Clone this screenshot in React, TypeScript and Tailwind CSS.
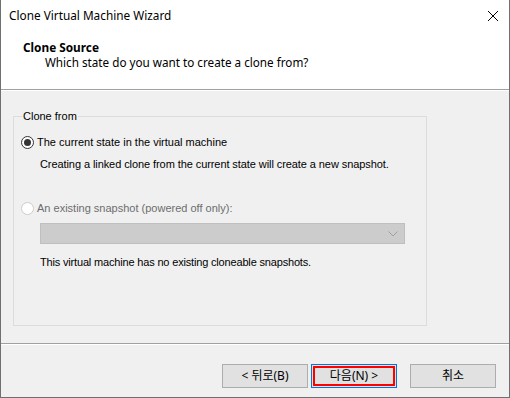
import React from "react";

const font = { fontFamily: '"Segoe UI", "Noto Sans", "Noto Sans CJK KR", sans-serif' };
const bodyFont = { fontFamily: 'Tahoma, "Liberation Sans", Arial, sans-serif' };

function Radio({ checked, disabled }: { checked?: boolean; disabled?: boolean }) {
  return (
    <svg width="13" height="13" viewBox="0 0 13 13" className="shrink-0">
      <circle cx="6.5" cy="6.5" r="6" fill="#ffffff" stroke={disabled ? "#cccccc" : "#333333"} strokeWidth="1" />
      {checked && <circle cx="6.5" cy="6.5" r="3.5" fill="#333333" />}
    </svg>
  );
}

function Btn({ children, focused }: { children: React.ReactNode; focused?: boolean }) {
  if (focused) {
    return (
      <div className="w-[86px] h-[24px] border border-[#0078d7] bg-[#e1e1e1] p-px">
        <div className="w-full h-full border-2 border-[#ff0000] flex items-center justify-center text-[12px] text-black">
          {children}
        </div>
      </div>
    );
  }
  return (
    <div className="w-[86px] h-[24px] border border-[#adadad] bg-[#e1e1e1] flex items-center justify-center text-[12px] text-black">
      {children}
    </div>
  );
}

export default function App() {
  return (
    <div className="w-[510px] h-[398px] bg-[#f0f0f0] border-l border-r border-b border-[#707070] flex flex-col text-black" style={font}>
      <div className="h-[89px] bg-white flex flex-col">
        <div className="h-[32px] flex items-center justify-between pl-[8px] pr-[10px]">
          <span className="text-[11.8px]">Clone Virtual Machine Wizard</span>
          <svg width="12" height="12" viewBox="0 0 12 12">
            <path d="M1 1 L11 11 M11 1 L1 11" stroke="#000" strokeWidth="1" />
          </svg>
        </div>
        <div className="pl-[22px] pt-[8px] leading-[15px]">
          <div className="text-[11.8px] font-bold">Clone Source</div>
          <div className="text-[11.7px] pl-[22px]">Which state do you want to create a clone from?</div>
        </div>
      </div>
      <div className="h-px bg-[#a0a0a0]" />
      <div className="h-px bg-white" />
      <div className="flex-1 flex flex-col" style={bodyFont}>
        <div className="h-[252px] pt-[25px] pl-[12px] pr-[82px]">
          <div className="relative h-[210px] border border-[#dcdcdc]">
            <span className="absolute left-[8px] top-[-9px] bg-[#f0f0f0] px-px text-[11px] leading-[16px]">Clone from</span>
            <div className="pt-[17px] pl-[7px] flex flex-col text-[11px]">
              <div className="flex items-center gap-[3px] h-[16px]">
                <Radio checked />
                <span>The current state in the virtual machine</span>
              </div>
              <div className="pl-[19px] mt-[6px] leading-[16px] whitespace-nowrap tracking-[-0.08px]">
                Creating a linked clone from the current state will create a new snapshot.
              </div>
              <div className="flex items-center gap-[3px] h-[16px] mt-[28px]">
                <Radio disabled />
                <span className="text-[#6d6d6d]">An existing snapshot (powered off only):</span>
              </div>
              <div className="ml-[19px] mt-[7px] w-[365px] h-[21px] bg-[#cccccc] border border-[#bfbfbf] flex items-center justify-end pr-[6px]">
                <svg width="10" height="6" viewBox="0 0 10 6">
                  <path d="M0.5 0.5 L5 5 L9.5 0.5" fill="none" stroke="#a0a0a0" strokeWidth="1" />
                </svg>
              </div>
              <div className="pl-[19px] mt-[10px] leading-[16px] tracking-[-0.17px]">
                This virtual machine has no existing cloneable snapshots.
              </div>
            </div>
          </div>
        </div>
        <div className="h-px bg-[#a0a0a0]" />
        <div className="h-px bg-white" />
        <div className="flex-1 flex items-start justify-end pt-[19px] pr-[12px]" style={font}>
          <Btn>&lt; 뒤로(B)</Btn>
          <div className="w-[3px]" />
          <Btn focused>다음(N) &gt;</Btn>
          <div className="w-[13px]" />
          <Btn>취소</Btn>
          <div className="w-[1px]" />
        </div>
      </div>
    </div>
  );
}
